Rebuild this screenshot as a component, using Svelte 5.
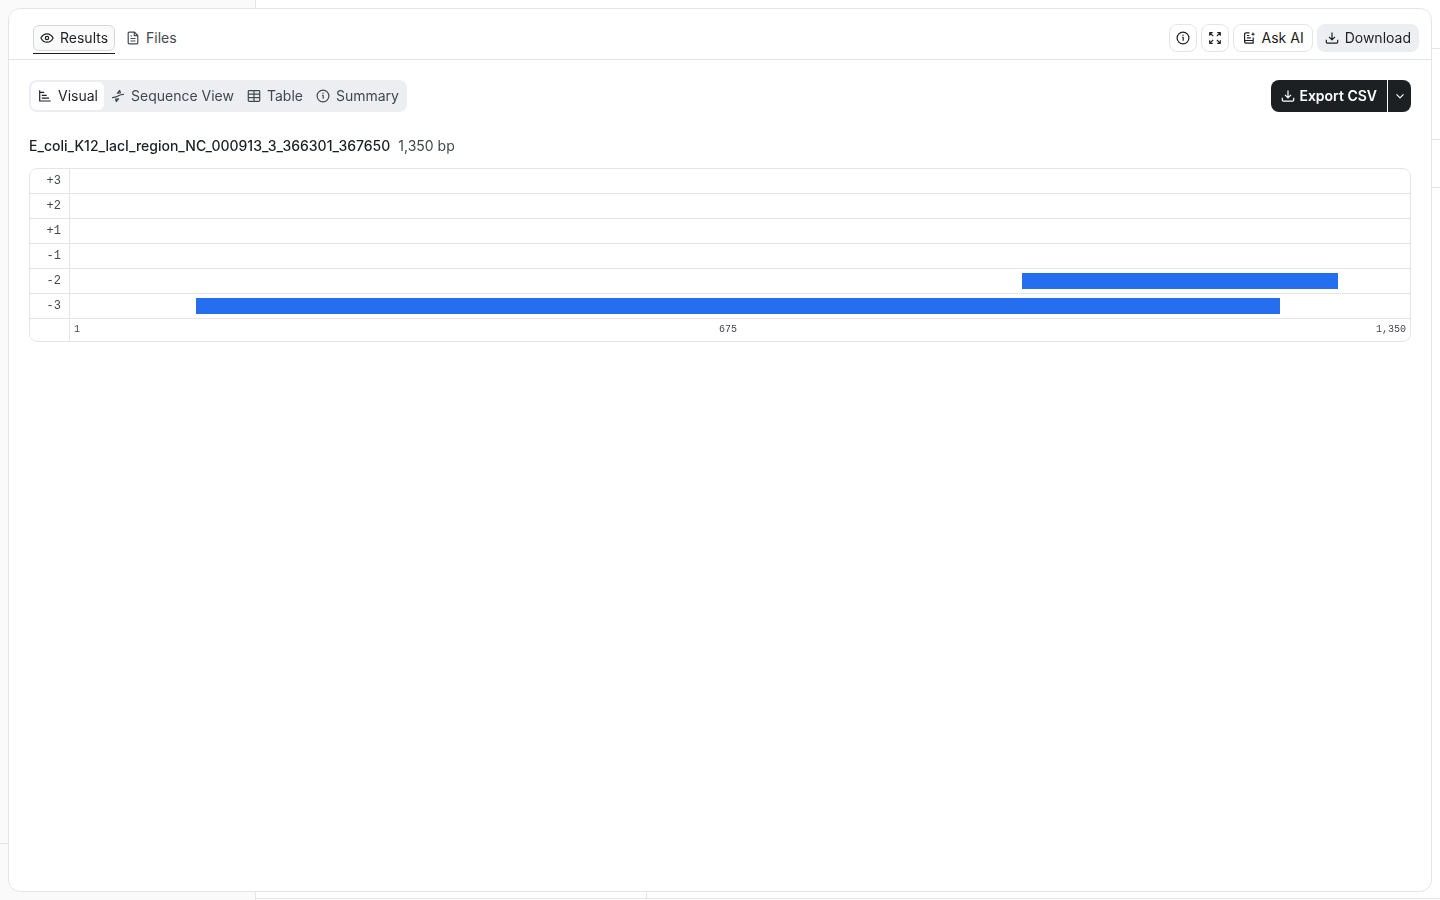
<script lang="ts">
  type Orf = { start: number; end: number };

  const sequence = {
    name: 'E_coli_K12_lacI_region_NC_000913_3_366301_367650',
    length: 1350,
  };

  const frames: { label: string; orfs: Orf[] }[] = [
    { label: '+3', orfs: [] },
    { label: '+2', orfs: [] },
    { label: '+1', orfs: [] },
    { label: '-1', orfs: [] },
    { label: '-2', orfs: [{ start: 960, end: 1277 }] },
    { label: '-3', orfs: [{ start: 128, end: 1219 }] },
  ];

  const views = [
    { id: 'visual', label: 'Visual', icon: 'chart' },
    { id: 'sequence', label: 'Sequence View', icon: 'sequence' },
    { id: 'table', label: 'Table', icon: 'table' },
    { id: 'summary', label: 'Summary', icon: 'info' },
  ];

  let tab = $state('results');
  let view = $state('visual');

  const ticks = [1, Math.floor(sequence.length / 2), sequence.length];
  const format = (n: number) => n.toLocaleString('en-US');
  const percent = (n: number) => `${(n / sequence.length) * 100}%`;
</script>

{#snippet icon(name: string)}
  <svg class="icon" viewBox="0 0 14 14" aria-hidden="true">
    {#if name === 'eye'}
      <path d="M.9 7C2.2 4.400 4.300 2.800 7 2.800S11.800 4.400 13.100 7C11.800 9.600 9.700 11.200 7 11.200S2.200 9.600.9 7Z" />
      <circle cx="7" cy="7" r="1.700" />
    {:else if name === 'file'}
      <path d="M8.500 1.200H3.200a1 1 0 0 0-1 1v9.600a1 1 0 0 0 1 1h7.600a1 1 0 0 0 1-1V4.500ZM8.300 1.400v3.300h3.300M4.500 5h1.500M4.500 7.500h5M4.500 10h5" />
    {:else if name === 'info'}
      <circle cx="7" cy="7" r="5.900" />
      <path d="M6.200 6.400H7.200V9.800" />
      <circle class="solid" cx="7" cy="4.300" r=".7" />
    {:else if name === 'expand'}
      <path d="M1.700 4.700v-3h3M9.300 1.700h3v3M12.300 9.300v3h-3M4.700 12.300h-3v-3M1.900 1.900l3.300 3.300M12.100 1.900L8.800 5.200M12.100 12.100L8.800 8.800M1.900 12.100l3.300-3.300" />
    {:else if name === 'ask'}
      <path d="M7.500 1.900H3.900a1.300 1.300 0 0 0-1.300 1.300v7.600a1.400 1.400 0 0 0 1.400 1.400h7.200V9.500H4a1.400 1.400 0 0 0-1.400 1.300M11.200 9.500V6.500M4.900 4.500h2.300M4.900 6.900h3.900" />
      <path class="solid" d="M11 1l.6 1.600 1.600.6-1.600.6L11 5.400l-.6-1.600L8.800 3.200l1.600-.6Z" />
    {:else if name === 'download'}
      <path d="M7 1.500v7M4 5.800l3 3 3-3M1.300 8.800v2.300a1 1 0 0 0 1 1h9.400a1 1 0 0 0 1-1V8.800" />
    {:else if name === 'chart'}
      <path d="M1.700 1.200v10.800h11M1.700 3.400h4.500M3.800 6.400h4.900M3.800 9.200h7.200" />
    {:else if name === 'sequence'}
      <path d="M1 8.500C3.400 8.800 5.200 7.900 7 7s3.600-1.800 6-1.500M6.400 4.100L8.700 1.400 9.400 3.900ZM4.600 10.100L5.300 12.600 7.600 9.900Z" />
    {:else if name === 'table'}
      <rect x="1.300" y="1.700" width="11.400" height="10.600" rx=".8" />
      <path d="M1.300 5.200h11.400M1.300 8.700h11.400M7 1.700v10.600" />
    {:else if name === 'chevron'}
      <path d="M3.500 5.300L7 8.800l3.500-3.500" />
    {/if}
  </svg>
{/snippet}

<div class="backdrop" aria-hidden="true">
  <div class="sidebar">
    <div class="sidebar-footer"></div>
  </div>
  <div class="workspace">
    <div class="topbar"></div>
    <div class="heading"></div>
    <div class="toolbar"></div>
    <div class="columns">
      <div class="list"></div>
    </div>
  </div>
</div>

<main class="panel">
  <header>
    <nav class="tabs">
      <button class="tab" class:active={tab === 'results'} onclick={() => (tab = 'results')}>
        {@render icon('eye')}Results
      </button>
      <button class="tab" class:active={tab === 'files'} onclick={() => (tab = 'files')}>
        {@render icon('file')}Files
      </button>
    </nav>
    <div class="actions">
      <button class="action square" aria-label="Details">{@render icon('info')}</button>
      <button class="action square" aria-label="Expand">{@render icon('expand')}</button>
      <button class="action">{@render icon('ask')}Ask AI</button>
      <button class="action filled">{@render icon('download')}Download</button>
    </div>
  </header>

  <div class="content">
    <div class="controls">
      <div class="views">
        {#each views as v}
          <button class="view" class:active={view === v.id} onclick={() => (view = v.id)}>
            {@render icon(v.icon)}{v.label}
          </button>
        {/each}
      </div>
      <div class="export">
        <button class="export-main">{@render icon('download')}Export CSV</button>
        <button class="export-more" aria-label="More export formats">{@render icon('chevron')}</button>
      </div>
    </div>

    <div class="title">
      <h1>{sequence.name}</h1>
      <span>{format(sequence.length)} bp</span>
    </div>

    <div class="map">
      {#each frames as frame}
        <div class="row">
          <div class="label">{frame.label}</div>
          <div class="track">
            {#each frame.orfs as orf}
              <div
                class="orf"
                style:margin-left={percent(orf.start - 1)}
                style:width={percent(orf.end - orf.start + 1)}
              ></div>
            {/each}
          </div>
        </div>
      {/each}
      <div class="row axis">
        <div class="label"></div>
        <div class="ticks">
          {#each ticks as tick}
            <span>{format(tick)}</span>
          {/each}
        </div>
      </div>
    </div>
  </div>
</main>

<style>
  :global(body) {
    --line: #e3e5e8;
    --text: #1d2023;
    --muted: #43474d;
    background: #fff;
    color: var(--text);
    font-family: Inter, "Liberation Sans", sans-serif;
    font-size: 14px;
    line-height: 20px;
  }
  div, main, header, button {
    box-sizing: border-box;
  }
  button {
    display: flex;
    align-items: center;
    justify-content: center;
    gap: 6px;
    margin: 0;
    padding: 0;
    border: 0;
    background: none;
    color: inherit;
    font: inherit;
    white-space: nowrap;
    cursor: pointer;
  }
  .icon {
    flex: none;
    width: 14px;
    height: 14px;
    fill: none;
    stroke: currentColor;
    stroke-width: 1.2;
    stroke-linejoin: round;
  }
  .solid {
    fill: currentColor;
    stroke: none;
  }

  /* Page behind the panel */
  .backdrop {
    display: flex;
    height: 100vh;
  }
  .sidebar {
    display: flex;
    flex-direction: column;
    justify-content: flex-end;
    width: 256px;
    background: #fafafa;
    border-right: 1px solid var(--line);
  }
  .sidebar-footer {
    height: 57px;
    border-top: 1px solid var(--line);
  }
  .workspace {
    flex: 1;
    display: flex;
    flex-direction: column;
    padding-bottom: 1px;
  }
  .topbar, .heading, .toolbar, .columns {
    border-bottom: 1px solid var(--line);
  }
  .topbar {
    height: 49px;
  }
  .heading {
    height: 91px;
  }
  .toolbar {
    height: 48px;
  }
  .columns {
    flex: 1;
    display: flex;
  }
  .list {
    width: 391px;
    border-right: 1px solid var(--line);
  }

  /* Panel */
  .panel {
    position: fixed;
    inset: 8px;
    display: flex;
    flex-direction: column;
    overflow: auto;
    background: #fff;
    border: 1px solid var(--line);
    border-radius: 12px;
  }
  header {
    display: flex;
    justify-content: space-between;
    align-items: center;
    padding: 15px 12px 7px 24px;
    border-bottom: 1px solid var(--line);
  }
  .tabs, .actions {
    display: flex;
    gap: 4px;
  }
  .tab {
    height: 26px;
    padding: 0 6px;
    border: 1px solid transparent;
    border-radius: 6px;
    color: var(--muted);
  }
  .tab.active {
    position: relative;
    color: var(--text);
    background: #fafafa;
    border-color: #d5d7da;
  }
  .tab.active::after {
    content: '';
    position: absolute;
    left: -1px;
    right: -1px;
    bottom: -4px;
    height: 1px;
    background: var(--text);
  }
  .action {
    height: 28px;
    padding: 0 8px;
    border: 1px solid var(--line);
    border-radius: 8px;
  }
  .action.square {
    width: 28px;
    padding: 0;
  }
  .action.filled {
    padding: 0 7px;
    background: #eceef1;
    border-color: #eceef1;
  }

  .content {
    padding: 20px;
  }
  .controls {
    display: flex;
    justify-content: space-between;
    align-items: center;
  }
  .views {
    display: flex;
    padding: 2px;
    background: #eceef1;
    border-radius: 8px;
  }
  .view {
    height: 28px;
    padding: 0 6px 0 7px;
    border-radius: 6px;
    color: var(--muted);
  }
  .view.active {
    color: var(--text);
    background: #fff;
  }
  .export {
    display: flex;
    gap: 1px;
    color: #fff;
    font-weight: 600;
  }
  .export button {
    height: 32px;
    background: #1d2023;
  }
  .export .export-main {
    gap: 4px;
    padding: 0 10px;
    border-radius: 8px 0 0 8px;
  }
  .export .export-more {
    width: 23px;
    border-radius: 0 8px 8px 0;
  }

  .title {
    display: flex;
    gap: 8px;
    margin: 24px 0 12px;
    color: var(--muted);
  }
  h1 {
    margin: 0;
    color: var(--text);
    font-size: 14px;
    font-weight: 500;
  }

  /* Reading frame map */
  .map {
    overflow: hidden;
    border: 1px solid var(--line);
    border-radius: 8px;
    font-family: "Liberation Mono", monospace;
    font-size: 12px;
    color: var(--muted);
  }
  .row {
    display: flex;
    height: 25px;
    border-bottom: 1px solid var(--line);
  }
  .label {
    display: flex;
    align-items: center;
    justify-content: flex-end;
    width: 40px;
    padding-right: 8px;
    border-right: 1px solid var(--line);
  }
  .track {
    flex: 1;
    display: flex;
    align-items: center;
  }
  .orf {
    height: 16px;
    background: #256ef0;
  }
  .axis {
    height: 22px;
    border-bottom: 0;
    font-size: 10px;
  }
  .ticks {
    flex: 1;
    display: flex;
    align-items: center;
    justify-content: space-between;
    padding: 0 4px;
  }
</style>
